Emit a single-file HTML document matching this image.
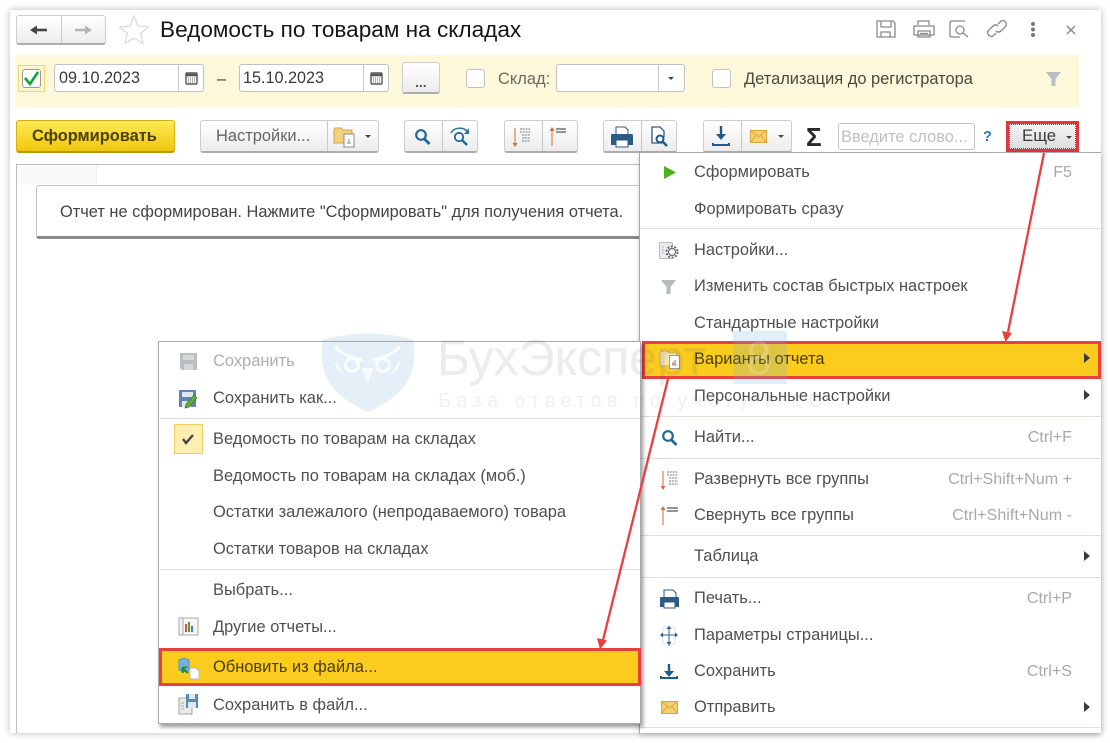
<!DOCTYPE html>
<html><head><meta charset="utf-8"><style>
html,body{margin:0;padding:0;width:1110px;height:743px;overflow:hidden;background:#fff}
#r{position:relative;width:1110px;height:743px;overflow:hidden;font-family:"Liberation Sans",sans-serif;filter:blur(.35px)}
.a,.t,.b{position:absolute;box-sizing:border-box}
.t{white-space:nowrap;line-height:22px;font-size:16.45px;color:#505050}
.s{color:#a9a9a9;text-align:right;font-size:16.1px}
.b{background:linear-gradient(#fff,#ececec);border:1px solid #cdcdcd;border-bottom:2px solid #adadad;border-radius:3px}
.d{position:absolute;top:0;bottom:0;width:1px;background:#c9c9c9}
.f{background:#fff;border:1px solid #c2c2c2;border-radius:3px}
.sep{position:absolute;height:1px;background:#e2e0d8}
.tri{position:absolute;width:0;height:0;border-left:6px solid #3a3a3a;border-top:5.5px solid transparent;border-bottom:5.5px solid transparent}
.dn{position:absolute;width:0;height:0;border-top:3px solid #444;border-left:3px solid transparent;border-right:3px solid transparent}
</style></head><body><div id="r">

<div class="a" style="left:10px;top:10px;width:1091px;height:723px;background:#fff;box-shadow:0 0 7px rgba(0,0,0,.28)"></div>

<div class="b" style="left:16px;top:15px;width:90px;height:30px"><div class="d" style="left:44px"></div></div>
<div class="t" style="left:160px;top:18px;line-height:24px;font-size:22.6px;color:#151515">Ведомость по товарам на складах</div>

<div class="a" style="left:16px;top:55px;width:1063px;height:53px;background:#fdf8da"></div>
<div class="a" style="left:18px;top:65px;width:27px;height:27px;border:1px solid #ecd87a;background:#fdf6cf"></div>
<div class="a f" style="left:22px;top:69px;width:19px;height:19px;border-color:#999"></div>
<div class="a f" style="left:54px;top:64px;width:150px;height:28px"><div class="d" style="left:123px"></div></div>
<div class="t" style="left:59px;top:67px;font-size:16.2px;color:#3a3a3a">09.10.2023</div>
<div class="t" style="left:217px;top:68px;color:#444">–</div>
<div class="a f" style="left:239px;top:64px;width:150px;height:28px"><div class="d" style="left:123px"></div></div>
<div class="t" style="left:243px;top:67px;font-size:16.2px;color:#3a3a3a">15.10.2023</div>
<div class="b" style="left:402px;top:62px;width:38px;height:32px"></div>
<div class="t" style="left:415px;top:71px;font-size:14px;font-weight:bold;color:#555">...</div>
<div class="a f" style="left:466px;top:69px;width:19px;height:19px"></div>
<div class="t" style="left:498px;top:68px;color:#6a6a60">Склад:</div>
<div class="a f" style="left:556px;top:64px;width:129px;height:28px"><div class="d" style="left:101px"></div></div>
<div class="dn" style="left:668px;top:77px"></div>
<div class="a f" style="left:712px;top:69px;width:19px;height:19px"></div>
<div class="t" style="left:744px;top:68px;color:#4a4a3c">Детализация до регистратора</div>

<div class="a" style="left:16px;top:120px;width:159px;height:33px;border-radius:3px;background:linear-gradient(#fdea55,#f0c70c);border:1px solid #d3b013;border-bottom:2px solid #b8980f"></div>
<div class="t" style="left:32px;top:125px;font-weight:bold;color:#4b4000;font-size:16.4px">Сформировать</div>
<div class="b" style="left:200px;top:120px;width:179px;height:33px"><div class="d" style="left:126px"></div></div>
<div class="t" style="left:216px;top:125px;color:#666">Настройки...</div>
<div class="dn" style="left:365px;top:135px"></div>
<div class="b" style="left:404px;top:120px;width:74px;height:33px"><div class="d" style="left:37px"></div></div>
<div class="b" style="left:504px;top:120px;width:74px;height:33px"><div class="d" style="left:37px"></div></div>
<div class="b" style="left:603px;top:120px;width:74px;height:33px"><div class="d" style="left:37px"></div></div>
<div class="b" style="left:703px;top:120px;width:89px;height:33px"><div class="d" style="left:37px"></div></div>
<div class="dn" style="left:778px;top:135px"></div>
<div class="t" style="left:806px;top:124px;font-size:26px;line-height:26px;color:#2a2a2a;font-weight:bold">Σ</div>
<div class="a f" style="left:838px;top:123px;width:137px;height:27px"></div>
<div class="t" style="left:841px;top:126px;color:#c0c0c0">Введите слово...</div>
<div class="t" style="left:983px;top:126px;color:#1f7fb0;font-weight:bold;font-size:14.5px">?</div>
<div class="a" style="left:1006px;top:121px;width:73px;height:31px;background:linear-gradient(#f4f4f4,#dcdcdc);border:3px solid #e7343d"></div>
<div class="a" style="left:1009px;top:124px;width:67px;height:25px;border:1px dotted #555"></div>
<div class="t" style="left:1022px;top:125px;font-size:16.8px;color:#3c3c3c">Еще</div>
<div class="dn" style="left:1066px;top:136px"></div>

<div class="a" style="left:16px;top:164px;width:624px;height:569px;background:#fff;border:1px solid #bdbdbd;border-bottom:0;border-right:0"></div>
<div class="a" style="left:17px;top:165px;width:80px;height:20px;background:#fafafa;border-right:1px solid #f0f0f0"></div>
<div class="a" style="left:36px;top:185px;width:604px;height:54px;background:#fff;border:1px solid #c4c4c4;border-bottom:3px solid #8a8a8a;border-radius:3px 0 0 3px"></div>
<div class="t" style="left:60px;top:201px;color:#444;font-size:16.4px">Отчет не сформирован. Нажмите "Сформировать" для получения отчета.</div>

<!-- right menu -->
<div class="a" style="left:639px;top:152px;width:462px;height:581px;background:#fff;border-top:1px solid #a8a8a8;border-left:1px solid #a8a8a8;box-shadow:0 3px 5px rgba(0,0,0,.18)"></div>
<div class="sep" style="left:640px;top:228px;width:461px"></div>
<div class="sep" style="left:640px;top:416px;width:461px"></div>
<div class="sep" style="left:640px;top:458px;width:461px"></div>
<div class="sep" style="left:640px;top:535px;width:461px"></div>
<div class="sep" style="left:640px;top:577px;width:461px"></div>
<div class="sep" style="left:640px;top:727px;width:461px"></div>
<div class="a" style="left:642px;top:341px;width:459px;height:38px;background:#fbcb1e;border:3px solid #e8403f"></div>
<div class="t" style="left:694px;top:161px">Сформировать</div>
<div class="t s" style="right:38px;top:161px">F5</div>
<div class="t" style="left:694px;top:198px">Формировать сразу</div>
<div class="t" style="left:694px;top:239px">Настройки...</div>
<div class="t" style="left:694px;top:275px">Изменить состав быстрых настроек</div>
<div class="t" style="left:694px;top:312px">Стандартные настройки</div>
<div class="t" style="left:694px;top:348px;color:#4a3c08">Варианты отчета</div>
<div class="t" style="left:694px;top:385px">Персональные настройки</div>
<div class="t" style="left:694px;top:426px">Найти...</div>
<div class="t s" style="right:38px;top:426px">Ctrl+F</div>
<div class="t" style="left:694px;top:468px">Развернуть все группы</div>
<div class="t s" style="right:38px;top:468px">Ctrl+Shift+Num +</div>
<div class="t" style="left:694px;top:504px">Свернуть все группы</div>
<div class="t s" style="right:38px;top:504px">Ctrl+Shift+Num -</div>
<div class="t" style="left:694px;top:545px">Таблица</div>
<div class="t" style="left:694px;top:587px">Печать...</div>
<div class="t s" style="right:38px;top:587px">Ctrl+P</div>
<div class="t" style="left:694px;top:624px">Параметры страницы...</div>
<div class="t" style="left:694px;top:660px">Сохранить</div>
<div class="t s" style="right:38px;top:660px">Ctrl+S</div>
<div class="t" style="left:694px;top:696px">Отправить</div>
<div class="tri" style="left:1084px;top:353px"></div>
<div class="tri" style="left:1084px;top:390px"></div>
<div class="tri" style="left:1084px;top:551px"></div>
<div class="tri" style="left:1084px;top:702px"></div>

<!-- left menu -->
<div class="a" style="left:158px;top:341px;width:483px;height:383px;background:#fff;border:1px solid #ababab;box-shadow:2px 3px 4px rgba(0,0,0,.4)"></div>
<div class="sep" style="left:160px;top:418px;width:480px"></div>
<div class="sep" style="left:160px;top:569px;width:480px"></div>
<div class="a" style="left:174px;top:424px;width:29px;height:30px;background:#fdefb2;border:1px solid #efcf62"></div>
<div class="a" style="left:159px;top:648px;width:482px;height:38px;background:#fbcb1e;border:3px solid #e8403f"></div>
<div class="t" style="left:213px;top:350px;color:#aeaeae">Сохранить</div>
<div class="t" style="left:213px;top:387px">Сохранить как...</div>
<div class="t" style="left:213px;top:428px">Ведомость по товарам на складах</div>
<div class="t" style="left:213px;top:465px">Ведомость по товарам на складах (моб.)</div>
<div class="t" style="left:213px;top:501px">Остатки залежалого (непродаваемого) товара</div>
<div class="t" style="left:213px;top:538px">Остатки товаров на складах</div>
<div class="t" style="left:213px;top:579px">Выбрать...</div>
<div class="t" style="left:213px;top:616px">Другие отчеты...</div>
<div class="t" style="left:213px;top:656px;color:#4a3c08">Обновить из файла...</div>
<div class="t" style="left:213px;top:694px">Сохранить в файл...</div>

<svg class="a" style="left:0;top:0" width="1110" height="743" viewBox="0 0 1110 743" fill="none">
<!-- nav -->
<path d="M47 30H35" stroke="#444" stroke-width="2.600"/><path d="M37 25.500l-7 4.500 7 4.500z" fill="#444"/>
<path d="M75 30h12" stroke="#b5b5b5" stroke-width="2.600"/><path d="M85 25.500l7 4.500-7 4.500z" fill="#b5b5b5"/>
<path d="M134 16l4 10 10.500 1-8 6.500 2.500 10-9-5.500-9 5.500 2.500-10-8-6.500 10.500-1z" stroke="#d6d6d6" stroke-width="1.100" fill="#fff"/>
<!-- top right -->
<g stroke="#8a8a8a" stroke-width="1.300">
<path d="M877 21h16l2 2v14h-18z"/><path d="M881 21v6h10v-6M881 37v-5h9v5"/>
<path d="M918 25v-4h11v4M914 26h20v9h-20zM918 31h12v6h-12zM920 33.500h8"/>
<path d="M965 21h-13q-2 0-2 2v12q0 2 2 2h8"/><circle cx="960" cy="30" r="4"/><path d="M963 33l5 4"/>
<path d="M998 24l2.500-2.500c3-3 8 2 5 5l-4 4c-2 2-4 2-5.500 .5" stroke-width="1.400"/>
<path d="M996 33l-2.500 2.500c-3 3-8-2-5-5l4-4c2-2 4-2 5.500-.5" stroke-width="1.400"/>
<path d="M1067 26l8 8M1075 26l-8 8" stroke-width="1.500"/>
</g>
<g fill="#777"><circle cx="1033" cy="24" r="2"/><circle cx="1033" cy="29.500" r="2"/><circle cx="1033" cy="35" r="2"/></g>
<!-- checkbox -->
<path d="M25 78l5 6 8-12" stroke="#16a03c" stroke-width="2.600"/>
<!-- calendars -->
<g><rect x="186" y="73" width="11" height="11" rx="1" fill="#fff" stroke="#555" stroke-width="1.400"/><path d="M186 75h11" stroke="#555" stroke-width="2.500"/><path d="M188 78h7M188 80h7M188 82h7" stroke="#666" stroke-dasharray="1 1"/></g>
<g transform="translate(185 0)"><rect x="186" y="73" width="11" height="11" rx="1" fill="#fff" stroke="#555" stroke-width="1.400"/><path d="M186 75h11" stroke="#555" stroke-width="2.500"/><path d="M188 78h7M188 80h7M188 82h7" stroke="#666" stroke-dasharray="1 1"/></g>
<!-- funnel -->
<path d="M1046 72h15l-5.500 7v7h-4v-7z" fill="#b5bfc4"/>
<!-- settings folder -->
<g><path d="M334 143v-13l1-2h6l2 2h9v13z" fill="#f2d27c" stroke="#d0a94a"/><rect x="344" y="134" width="10" height="13" fill="#fff" stroke="#888"/><path d="M347 143h4M349 143v-4" stroke="#888"/></g>
<!-- search -->
<circle cx="421" cy="135" r="4.800" stroke="#1f6a96" stroke-width="2.200"/><path d="M424.500 139l5 5" stroke="#1f6a96" stroke-width="2.800"/>
<circle cx="459" cy="137" r="4.200" stroke="#1f6a96" stroke-width="1.800"/><path d="M462 140l5 5" stroke="#1f6a96" stroke-width="2.400"/><path d="M451 133c3-6 12-6 16-2" stroke="#2a7aa5" stroke-width="1.600"/><path d="M469 128v6h-5z" fill="#2a7aa5"/>
<!-- expand/collapse -->
<path d="M515 128v17" stroke="#e38a5c" stroke-width="1.300"/><path d="M512.500 143l2.500 4 2.500-4z" fill="#dc6b35"/>
<path d="M520 129h10M520 132h10M522 135h8M522 138h8M522 141h8" stroke="#777" stroke-dasharray="2 .8"/>
<path d="M552 129v17" stroke="#e38a5c" stroke-width="1.300"/><path d="M549.500 131l2.500-4 2.500 4z" fill="#dc6b35"/>
<path d="M556 129h10M556 132h10" stroke="#555" stroke-width="1.300"/>
<!-- print -->
<path d="M616 127h9l3 3v5h-12z" fill="#fff" stroke="#2c5a85"/><path d="M612 134h20q1 0 1 2v9h-22v-9q0-2 1-2z" fill="#2c5a85"/><rect x="616" y="140" width="12" height="7" fill="#fff" stroke="#2c5a85"/>
<path d="M662 143h-10v-16h8l4 4v6" fill="#fff" stroke="#2c5a85" stroke-width="1.300"/><circle cx="660" cy="139" r="3.500" fill="#fff" stroke="#1e5a85" stroke-width="2"/><path d="M663 142l4 4" stroke="#1e5a85" stroke-width="2.500"/>
<!-- save/mail -->
<path d="M721 126v11" stroke="#1f5c8c" stroke-width="2.400"/><path d="M716 134h10l-5 6z" fill="#1f5c8c"/><path d="M713 143v2h16v-2" stroke="#1f5c8c" stroke-width="2"/>
<rect x="750.500" y="130.500" width="16" height="12" fill="#f6cf70" stroke="#d9a63a"/><path d="M750.500 130.500l8 6.500 8-6.500M750.500 142.500l5.500-7M766.500 142.500l-5.500-7" stroke="#d9a63a"/>
<!-- menu icons right -->
<path d="M664 166l12 6.500-12 6.500z" fill="#4db020"/>
<rect x="659.500" y="242.500" width="13" height="16" rx="1" fill="#e8edf0" stroke="#b4bcc2"/><path d="M662 247h2M662 250h2M662 253h2" stroke="#b4bcc2"/><circle cx="672" cy="252" r="5.500" fill="#fff" stroke="#6a6a6a" stroke-width="2" stroke-dasharray="2 1.500"/><circle cx="672" cy="252" r="3.500" stroke="#6a6a6a" stroke-width="1.200"/>
<path d="M661 280h15l-5.500 7v7h-4v-7z" fill="#b4bcc1"/>
<path d="M660 366v-13l1-2h6l2 2h8v13z" fill="#f8e4ae" stroke="#c4ad6a"/><rect x="669.500" y="355.500" width="10" height="13" fill="#fff" stroke="#999"/><path d="M672 365h5" stroke="#999"/><path d="M673 365v-3M675 365v-5" stroke="#c0554a"/>
<circle cx="668" cy="436" r="4.800" stroke="#1f6a96" stroke-width="2.200"/><path d="M671.500 440l5 5" stroke="#1f6a96" stroke-width="2.800"/>
<path d="M663 471v17" stroke="#e38a5c" stroke-width="1.300"/><path d="M660.500 486l2.500 4 2.500-4z" fill="#dc6b35"/>
<path d="M667 472h11M667 475h11M669 478h9M669 481h9M669 484h9" stroke="#777" stroke-dasharray="2 .8"/>
<path d="M663 508v17" stroke="#e38a5c" stroke-width="1.300"/><path d="M660.500 510l2.500-4 2.500 4z" fill="#dc6b35"/>
<path d="M667 508h11M667 511h11" stroke="#555" stroke-width="1.300"/>
<path d="M664 590h9l3 3v5h-12z" fill="#fff" stroke="#2c5a85"/><path d="M661 597h17q1 0 1 2v8h-19v-8q0-2 1-2z" fill="#2c5a85"/><rect x="664" y="602" width="11" height="6" fill="#fff" stroke="#2c5a85"/>
<rect x="663" y="627" width="12" height="17" stroke="#dfe5ea"/><path d="M669 626v20M661 635h16" stroke="#2c5f88"/><path d="M666.500 629l2.500-3 2.500 3zM666.500 642l2.500 3 2.500-3zM663 632.500l-3 2.500 3 2.500zM675 632.500l3 2.500-3 2.500z" fill="#2c5f88"/>
<path d="M669 664v10" stroke="#1f5c8c" stroke-width="2.400"/><path d="M664 671h10l-5 6z" fill="#1f5c8c"/><path d="M661 676v2h16v-2" stroke="#1f5c8c" stroke-width="2"/>
<rect x="661.500" y="701.500" width="16" height="12" fill="#f6cf70" stroke="#d9a63a"/><path d="M661.500 701.500l8 6.500 8-6.500M661.500 713.500l5.500-7M677.500 713.500l-5.500-7" stroke="#d9a63a"/>
<!-- menu icons left -->
<path d="M180 353h17v17h-15l-2-2z" fill="#b9bec2"/><rect x="183" y="355" width="11" height="5" fill="#d6d9dc"/><rect x="184" y="364" width="9" height="6" fill="#d6d9dc"/>
<path d="M179 390h17v17h-17z" fill="#5d85ad"/><rect x="182" y="392" width="11" height="5" fill="#dfe8f0"/><rect x="182" y="401" width="9" height="6" fill="#dfe8f0"/><path d="M186 404l8-9 3 3-8 9-4 1z" fill="#62ad3c" stroke="#3f7a25" stroke-width=".7"/>
<path d="M183 439l3 4 7-8" stroke="#444" stroke-width="2.400"/>
<rect x="179" y="618" width="13" height="17" fill="#f3f3f0" stroke="#aaa"/><rect x="183" y="618" width="15" height="17" fill="#f5f5f2" stroke="#aaa"/><path d="M186 632v-8" stroke="#dc5340" stroke-width="2"/><path d="M189 632v-10" stroke="#4ba24a" stroke-width="2"/><path d="M192 632v-6" stroke="#3a7fc0" stroke-width="2"/>
<path d="M179 660q5-3 10 0v10q-5 3-10 0z" fill="#6fb1dc" stroke="#5d94b5"/><path d="M182 668l6 5M182 668l5-1M182 668l1 5" stroke="#1f8a30" stroke-width="1.800"/><path d="M190 668h6l3 3v8h-9z" fill="#fff" stroke="#bbb"/>
<rect x="179" y="698" width="13" height="16" fill="#eaece8" stroke="#a5a5a5"/><path d="M181 703h3M181 706h3M181 709h3" stroke="#aaa"/><path d="M186 694h12v14h-12z" fill="#5b8bb2"/><rect x="189" y="694" width="6" height="5" fill="#dfe8f0"/><rect x="188" y="702" width="8" height="6" fill="#dfe8f0"/>
<!-- arrows -->
<path d="M1044 153L1008 332" stroke="#e8403f" stroke-width="2.300"/><path d="M1002 331l10 2-6.500 9z" fill="#e8403f"/>
<path d="M668 379L603 640" stroke="#e8403f" stroke-width="2.300"/><path d="M597 638l10 2.500-7 9z" fill="#e8403f"/>
</svg>

<!-- watermark -->
<svg class="a" style="left:0;top:0" width="1110" height="743" viewBox="0 0 1110 743" fill="none">
<path d="M322 340q46-13 92 0v22q-4 32-46 50q-42-18-46-50z" fill="rgba(120,175,220,.2)"/>
<g stroke="rgba(255,255,255,.8)" fill="none">
<circle cx="352" cy="365" r="6.500" stroke-width="3"/><circle cx="383" cy="365" r="6.500" stroke-width="3"/>
<path d="M335 347q10 10 28 13M400 347q-10 10-28 13" stroke-width="3"/>
<path d="M336 362q2 8 7 11M399 362q-2 8-7 11" stroke-width="2.500"/>
</g>
<path d="M362 368h11l-5.500 16z" fill="rgba(255,255,255,.75)"/>
<rect x="733" y="331" width="54" height="53" fill="rgba(110,170,225,.2)"/>
</svg>
<div class="t" style="left:437px;top:330px;line-height:56px;font-size:50px;color:rgba(70,70,120,.11)">БухЭксперт</div>
<div class="t" style="left:746px;top:332px;line-height:52px;font-size:46px;color:rgba(255,255,255,.2)">8</div>
<div class="t" style="left:438px;top:390px;font-size:20px;letter-spacing:5.300px;color:rgba(70,70,120,.08)">База ответов по учету в 1С</div>

</div></body></html>
